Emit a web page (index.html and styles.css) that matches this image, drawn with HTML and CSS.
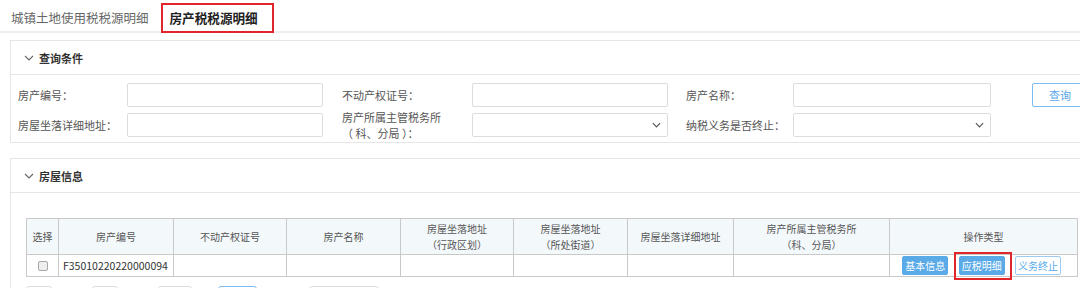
FILE: index.html
```html
<!DOCTYPE html>
<html lang="zh-CN">
<head>
    <meta charset="UTF-8">
    <title>房产税税源明细</title>
    <link rel="stylesheet" href="styles.css">
</head>
<body>
    <div class="page">
        <div class="tabs">
            <span class="tab">城镇土地使用税税源明细</span>
            <span class="tab active">房产税税源明细</span>
        </div>

        <div class="panel">
            <div class="panel-head">
                <svg class="chev" viewBox="0 0 10 6" width="10" height="6"><path d="M1 1l4 4 4-4" fill="none" stroke="#666" stroke-width="1.1"/></svg>
                查询条件
            </div>
            <div class="query">
                <div class="field f1">
                    <label>房产编号：</label>
                    <div class="ctrl"></div>
                </div>
                <div class="field f2">
                    <label>不动产权证号：</label>
                    <div class="ctrl"></div>
                </div>
                <div class="field f3">
                    <label>房产名称：</label>
                    <div class="ctrl"></div>
                </div>
                <button class="btn-query">查询</button>

                <div class="field f1">
                    <label>房屋坐落详细地址：</label>
                    <div class="ctrl"></div>
                </div>
                <div class="field f2">
                    <label class="two-line">房产所属主管税务所<br>（ 科、分局 ）：</label>
                    <div class="ctrl select">
                        <svg viewBox="0 0 10 6" width="9" height="6"><path d="M1 1l4 4 4-4" fill="none" stroke="#555" stroke-width="1.3"/></svg>
                    </div>
                </div>
                <div class="field f3">
                    <label>纳税义务是否终止：</label>
                    <div class="ctrl select">
                        <svg viewBox="0 0 10 6" width="9" height="6"><path d="M1 1l4 4 4-4" fill="none" stroke="#555" stroke-width="1.3"/></svg>
                    </div>
                </div>
            </div>
        </div>

        <div class="panel">
            <div class="panel-head">
                <svg class="chev" viewBox="0 0 10 6" width="10" height="6"><path d="M1 1l4 4 4-4" fill="none" stroke="#666" stroke-width="1.1"/></svg>
                房屋信息
            </div>
            <div class="panel-body">
                <table class="grid">
                    <colgroup>
                        <col style="width:32px"><col style="width:115px"><col style="width:113px">
                        <col style="width:114px"><col style="width:113px"><col style="width:114px">
                        <col style="width:106px"><col style="width:156px"><col style="width:188px">
                    </colgroup>
                    <thead>
                        <tr>
                            <th>选择</th>
                            <th>房产编号</th>
                            <th>不动产权证号</th>
                            <th>房产名称</th>
                            <th>房屋坐落地址<br>（行政区划）</th>
                            <th>房屋坐落地址<br>（所处街道）</th>
                            <th>房屋坐落详细地址</th>
                            <th>房产所属主管税务所<br>（科、分局）</th>
                            <th>操作类型</th>
                        </tr>
                    </thead>
                    <tbody>
                        <tr>
                            <td class="center"><span class="check"></span></td>
                            <td>F35010220220000094</td>
                            <td></td>
                            <td></td>
                            <td></td>
                            <td></td>
                            <td></td>
                            <td></td>
                            <td class="ops">
                                <span class="op fill">基本信息</span>
                                <span class="op fill marked">应税明细</span>
                                <span class="op line">义务终止</span>
                            </td>
                        </tr>
                    </tbody>
                </table>
                <div class="pager">
                    <span class="pg" style="width:26px"></span>
                    <span class="pg" style="width:26px"></span>
                    <span class="pg" style="width:34px"></span>
                    <span class="pg cur" style="width:39px"></span>
                    <span class="pg" style="width:70px"></span>
                </div>
            </div>
        </div>
    </div>
</body>
</html>
```

FILE: styles.css
```css
* {
    margin: 0;
    padding: 0;
    box-sizing: border-box;
}

body {
    font-family: 'Noto Sans CJK SC', 'Noto Sans', sans-serif;
    background-color: #fff;
    color: #555;
    overflow: hidden;
    width: 1080px;
    height: 288px;
}

.page {
    width: 1110px;
}

.tabs {
    height: 33px;
    border-bottom: 2px solid #eeeeee;
    display: flex;
    align-items: flex-start;
    padding-left: 11px;
}

.tab {
    font-size: 12.5px;
    line-height: 29px;
    margin-top: 3px;
    color: #666;
}

.tab.active {
    color: #222;
    font-weight: bold;
    font-size: 12.6px;
    margin-left: 12px;
    padding: 0 14px 0 7px;
    border: 2px solid #e0262b;
    height: 30px;
    line-height: 25px;
}

.panel {
    margin: 7px 0 0 10px;
    border: 1px solid #e6e6e6;
}

.panel + .panel {
    margin-top: 15px;
}

.panel-head {
    height: 34px;
    border-bottom: 1px solid #e6e6e6;
    display: flex;
    align-items: center;
    padding-left: 13px;
    font-size: 11px;
    font-weight: bold;
    color: #333;
}

.chev {
    margin-right: 5px;
}

.query {
    display: grid;
    grid-template-columns: 324px 344px 346px 60px;
    row-gap: 6px;
    padding: 8px 0 5px 7px;
}

.field {
    display: flex;
    align-items: center;
    height: 24px;
    font-size: 11px;
}

.f1 label { width: 109px; }
.f2 label { width: 130px; }
.f3 label { width: 107px; }

.two-line {
    line-height: 16px;
}

.ctrl {
    height: 24px;
    border: 1px solid #dcdcdc;
    border-radius: 2px;
    background: #fff;
}

.f1 .ctrl { width: 196px; }
.f2 .ctrl { width: 196px; }
.f3 .ctrl { width: 198px; }

.ctrl.select {
    display: flex;
    align-items: center;
    justify-content: flex-end;
    padding-right: 6px;
}

.btn-query {
    height: 24px;
    width: 56px;
    border: 1px solid #7dbcf0;
    border-radius: 2px;
    background: #fff;
    color: #58a6e8;
    font-family: inherit;
    font-size: 11px;
}

.panel-body {
    padding: 25px 0 0 15px;
}

.grid {
    border-collapse: collapse;
    table-layout: fixed;
    width: 1051px;
    font-size: 10px;
}

.grid th,
.grid td {
    border: 1px solid #c9c9c9;
}

.grid th {
    height: 36px;
    background: #f3f8fb;
    font-weight: normal;
    color: #555;
    line-height: 16px;
}

.grid td {
    height: 22px;
    font-size: 10.5px;
    color: #333;
    padding-left: 4px;
}

.grid td.center {
    text-align: center;
    padding-left: 0;
}

.check {
    display: inline-block;
    width: 10px;
    height: 10px;
    border: 1px solid #a8a8a8;
    border-radius: 2px;
    background: #eee;
    vertical-align: -1px;
}

.ops {
    text-align: right;
    white-space: nowrap;
    padding-right: 16px;
}

.op {
    display: inline-block;
    width: 46px;
    height: 19px;
    line-height: 17px;
    text-align: center;
    font-size: 10px;
    border-radius: 2px;
    border: 1px solid #5aaae8;
    margin-left: 4px;
    vertical-align: middle;
}

.op.fill {
    background: #5aaae8;
    color: #fff;
}

.op.line {
    background: #fff;
    color: #5aaae8;
    border-color: #9dcbf2;
    margin-left: 8px;
}

/* red annotation box */
.op.marked {
    margin-left: 8px;
    position: relative;
}

.op.marked::after {
    content: '';
    position: absolute;
    top: -5px;
    bottom: -6px;
    left: -6px;
    right: -8px;
    border: 2px solid #e0262b;
}

.pager {
    display: flex;
    margin-top: 9px;
}

.pg {
    height: 22px;
    border: 1px solid #dcdcdc;
    border-radius: 3px;
    margin-right: 40px;
}

.pg:nth-child(3) { margin-right: 26px; }
.pg:nth-child(4) { margin-right: 52px; }

.pg.cur {
    border-color: #7dbcf0;
}
```
